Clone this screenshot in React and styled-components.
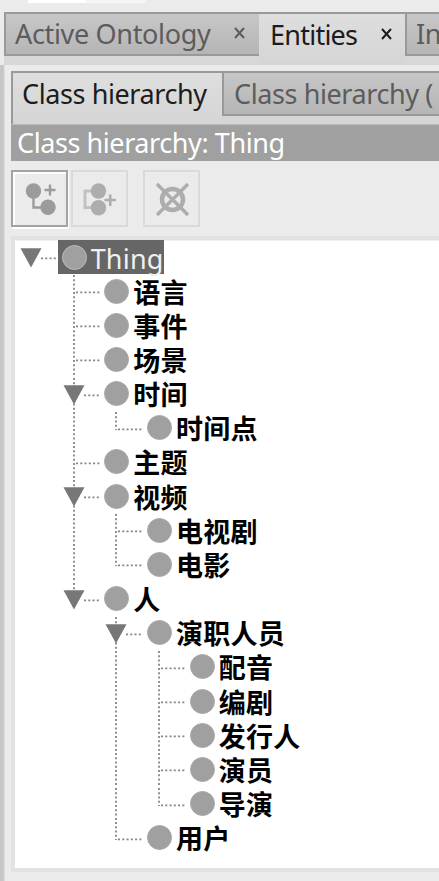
import React from "react";
import styled, { createGlobalStyle, css } from "styled-components";

const ROW = 34.16;
const STEP = 42.67;

const GlobalStyle = createGlobalStyle`
  * { box-sizing: border-box; }
  html, body { margin: 0; background: #ebebeb; }
  body { overflow: hidden; }
`;

const Window = styled.div`
  width: 439px;
  height: 881px;
  overflow: hidden;
  display: flex;
  flex-direction: column;
  background: #ebebeb;
  color: #222;
  font: 27px/34px "Noto Sans", "Noto Sans CJK SC", sans-serif;
  white-space: nowrap;
`;

const TopStrip = styled.div`
  display: flex;
  height: 12px;
  flex: none;
  padding-left: 28px;
`;

const StripField = styled.div`
  width: ${(p) => p.$width}px;
  height: 3px;
  background: ${(p) => p.$color};
`;

const MainTabs = styled.div`
  display: flex;
  align-items: flex-start;
  flex: none;
  height: 53px;
  margin-left: 4px;
  background: #d7d7d7;
`;

const Tab = styled.div`
  display: flex;
  align-items: center;
  flex: none;
  width: ${(p) => p.$width}px;
  height: ${(p) => p.$height}px;
  padding: 0 0 ${(p) => p.$drop || 0}px ${(p) => p.$inset}px;
  border-top: 2px solid #999;
  overflow: hidden;
  ${(p) =>
    p.$active
      ? css`
          color: #1c1c1c;
          background: linear-gradient(#dedede, #d5d5d5);
        `
      : css`
          color: #5c5c5c;
          background: linear-gradient(#c7c7c7, #b5b5b5);
          border-left: 2px solid #999;
          border-bottom: 2px solid #999;
        `}
  ${(p) => p.$edge && css`border-left: 2px solid #999;`}
`;

const Text = styled.span`
  flex: none;
  letter-spacing: ${(p) => p.$track || 0}px;
  width: ${(p) => (p.$width ? `${p.$width}px` : "auto")};
`;

const CloseIcon = styled.svg`
  width: 11px;
  height: 12px;
  margin-top: -2px;
  flex: none;
  fill: none;
  stroke: currentColor;
  stroke-width: 2;
`;

const Body = styled.div`
  display: flex;
  flex: 1;
  min-height: 0;
`;

const SideEdge = styled.div`
  width: 5px;
  flex: none;
  background: linear-gradient(90deg, #c6c6c6 0 3px, #d0d0d0 4px, #ebebeb 5px);
`;

const Panel = styled.div`
  display: flex;
  flex-direction: column;
  flex: 1;
  min-width: 0;
  padding: 6px 0 9px 6px;
`;

const SubTabs = styled.div`
  display: flex;
  align-items: flex-start;
  flex: none;
  height: 54px;
  background: #d5d5d5;
  border-bottom: 1px solid #bbb;
`;

const TitleBar = styled.div`
  flex: none;
  height: 36px;
  padding: 1px 0 0 6px;
  color: #fff;
  background: #a0a0a0;
`;

const Toolbar = styled.div`
  display: flex;
  flex: none;
  height: 75px;
  padding-top: 9px;
`;

const ToolButton = styled.button`
  width: 57px;
  height: 57px;
  padding: 0;
  margin: 0 ${(p) => p.$gap}px 0 0;
  border: 2px solid ${(p) => (p.$focused ? "#a2a2a2" : "#dadada")};
  background: #ebebeb;
  box-shadow: ${(p) => (p.$focused ? "inset 2px 2px #fff, 1px 2px #fff" : "none")};
  color: ${(p) => (p.$focused ? "#9b9b9b" : "#adadad")};
  svg { display: block; width: 53px; height: 53px; }
`;

const Tree = styled.div`
  flex: 1;
  min-height: 0;
  border: 4px solid #e2e2e2;
  border-right: 0;
  background: #fff;
  box-shadow: inset 0 1px #f2f2f2;
`;

const TreeRow = styled.div`
  display: flex;
  height: ${ROW}px;
`;

const Guide = styled.svg`
  display: block;
  flex: none;
  width: ${STEP}px;
  height: ${ROW}px;
  overflow: visible;
  fill: none;
  stroke: #858585;
  stroke-width: 1.8;
  stroke-dasharray: 2 2.27;
`;

const Node = styled.div`
  display: flex;
  align-items: center;
  height: 34px;
  padding-left: 4px;
  color: ${(p) => (p.$selected ? "#f0f0f0" : "#000")};
  background: ${(p) => (p.$selected ? "#666" : "transparent")};
`;

const Dot = styled.i`
  width: 25px;
  height: 25px;
  border-radius: 50%;
  background: #a0a0a0;
  border: 1px solid ${(p) => (p.$selected ? "#bcbcbc" : "#aaa")};
  margin-right: 4px;
`;

const NodeName = styled.span`
  font-weight: ${(p) => (p.$selected ? 400 : 700)};
  line-height: 34px;
  letter-spacing: ${(p) => (p.$selected ? 0.2 : 0.3)}px;
  padding-top: 2px;
  margin-bottom: -1px;
`;

const data = {
  name: "Thing",
  selected: true,
  children: [
    { name: "语言" },
    { name: "事件" },
    { name: "场景" },
    { name: "时间", children: [{ name: "时间点" }] },
    { name: "主题" },
    { name: "视频", children: [{ name: "电视剧" }, { name: "电影" }] },
    {
      name: "人",
      children: [
        {
          name: "演职人员",
          children: [
            { name: "配音" },
            { name: "编剧" },
            { name: "发行人" },
            { name: "演员" },
            { name: "导演" },
          ],
        },
        { name: "用户" },
      ],
    },
  ],
};

const Trunk = ({ from = 1, to = ROW }) => <path d={`M16 ${from}V${to}`} />;

/* An ancestor column carries its trunk only while that ancestor has siblings below. */
function Branch({ node, trunks = [], last = true, root = false }) {
  const open = Boolean(node.children);
  return (
    <>
      <TreeRow>
        {trunks.map((on, i) => (
          <Guide key={i}>{on && <Trunk />}</Guide>
        ))}
        <Guide>
          {!root && <Trunk to={open ? 8 : last ? 19 : ROW} />}
          {!root && open && !last && <Trunk from={26.6} />}
          <path d={`M${open ? 26 : 18} 18.3H42`} />
          {open && <path d="M5.5 8.3H26.5L16 27.5Z" fill="#777" stroke="none" />}
        </Guide>
        <Node $selected={node.selected}>
          <Dot $selected={node.selected} />
          <NodeName $selected={node.selected}>{node.name}</NodeName>
        </Node>
      </TreeRow>
      {open &&
        node.children.map((child, i) => (
          <Branch
            key={child.name}
            node={child}
            trunks={[...trunks, !last]}
            last={i === node.children.length - 1}
          />
        ))}
    </>
  );
}

const Close = () => (
  <CloseIcon viewBox="0 0 11 12">
    <path d="M1 1 10 11M10 1 1 11" />
  </CloseIcon>
);

export default function App() {
  return (
    <Window>
      <GlobalStyle />
      <TopStrip>
        <StripField $width={58} $color="#fff" />
        <StripField $width={60} $color="#f5f5f5" />
      </TopStrip>
      <MainTabs>
        <Tab $width={255} $height={44} $inset={9}>
          <Text $track={-0.33} $width={219}>Active Ontology</Text>
          <Close />
        </Tab>
        <Tab $width={146} $height={53} $inset={11} $drop={9} $active>
          <Text $track={-0.75} $width={111}>Entities</Text>
          <Close />
        </Tab>
        <Tab $width={60} $height={44} $inset={9}>
          <Text $track={-0.5}>In</Text>
        </Tab>
      </MainTabs>
      <Body>
        <SideEdge />
        <Panel>
          <SubTabs>
            <Tab $width={211} $height={53} $inset={9} $drop={9} $active $edge>
              <Text $track={-0.4}>Class hierarchy</Text>
            </Tab>
            <Tab $width={217} $height={45} $inset={10}>
              <Text $track={-0.4}>Class hierarchy (</Text>
            </Tab>
          </SubTabs>
          <TitleBar>
            <Text $track={-0.42}>Class hierarchy: Thing</Text>
          </TitleBar>
          <Toolbar>
            <ToolButton $gap={3} $focused aria-label="Add subclass">
              <svg viewBox="0 0 53 53" fill="none" stroke="currentColor" strokeWidth="2.4">
                <path d="M20.500 19V35.500H35M31.500 18H42.500M37 12.500V23.500" />
                <circle cx="20.500" cy="19" r="7.700" fill="currentColor" stroke="none" />
                <circle cx="35" cy="35.300" r="7.700" fill="currentColor" stroke="none" />
              </svg>
            </ToolButton>
            <ToolButton $gap={15} aria-label="Add sibling class">
              <svg viewBox="0 0 53 53" fill="none" stroke="currentColor" strokeWidth="2.600">
                <path d="M20 19H12V35.500H20" stroke="#c2c2c2" strokeWidth="3" />
                <path d="M31.500 28H43M37.200 22.500V34" />
                <circle cx="25.500" cy="19" r="7.700" fill="currentColor" stroke="none" />
                <circle cx="25.500" cy="35.800" r="7.700" fill="currentColor" stroke="none" />
              </svg>
            </ToolButton>
            <ToolButton $gap={0} aria-label="Delete class">
              <svg viewBox="0 0 53 53" fill="none" stroke="currentColor" strokeWidth="3.400">
                <circle cx="27.500" cy="27.500" r="10.500" strokeWidth="4.500" />
                <path d="M12 12 43 43M43 12 12 43" />
              </svg>
            </ToolButton>
          </Toolbar>
          <Tree>
            <Branch node={data} root />
          </Tree>
        </Panel>
      </Body>
    </Window>
  );
}
